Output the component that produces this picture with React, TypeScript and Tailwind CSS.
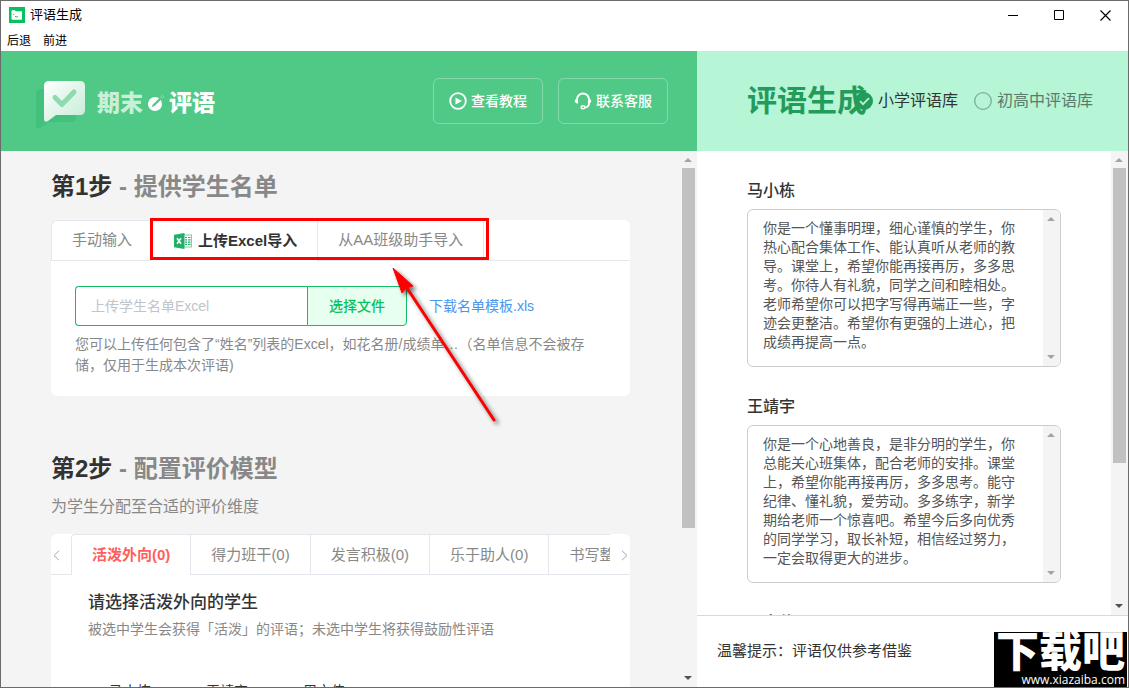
import React, { useState } from 'react';

interface Student {
  name: string;
  comment: string;
}

const STUDENTS: Student[] = [
  {
    name: '马小栋',
    comment:
      '你是一个懂事明理，细心谨慎的学生，你热心配合集体工作、能认真听从老师的教导。课堂上，希望你能再接再厉，多多思考。你待人有礼貌，同学之间和睦相处。老师希望你可以把字写得再端正一些，字迹会更整洁。希望你有更强的上进心，把成绩再提高一点。',
  },
  {
    name: '王靖宇',
    comment:
      '你是一个心地善良，是非分明的学生，你总能关心班集体，配合老师的安排。课堂上，希望你能再接再厉，多多思考。能守纪律、懂礼貌，爱劳动。多多练字，新学期给老师一个惊喜吧。希望今后多向优秀的同学学习，取长补短，相信经过努力，一定会取得更大的进步。',
  },
  { name: '周文伟', comment: '' },
];

const MODELS = ['活泼外向', '得力班干', '发言积极', '乐于助人', '书写整洁'];

const AppIcon = () => (
  <svg width="16" height="16" viewBox="0 0 16 16" aria-hidden="true">
    <rect width="16" height="16" fill="#07c160" />
    <path d="M2.500 4.200q0-.9.9-.9h2.400l1.100 1h5.200q.9 0 .9.9v6.600q0 .9-.9.9H3.400q-.9 0-.9-.9z" fill="#fff" />
    <path d="M4.200 7.300l1 .5M6 9.500q1.500 1 3 0" stroke="#07c160" fill="none" />
  </svg>
);

const BubbleLogo = () => (
  <svg width="52" height="50" viewBox="0 0 52 50" aria-hidden="true">
    <defs>
      <linearGradient id="bubble" x1="0" y1="0" x2="1" y2="1">
        <stop offset="0" stopColor="#fff" />
        <stop offset="1" stopColor="#c3ecd5" />
      </linearGradient>
    </defs>
    <path d="M6 9h30q5 0 5 5v23q0 5-5 5H14l-9 6q-4 2-4-2V14q0-5 5-5z" fill="#43c17c" />
    <path d="M14 1h31q5 0 5 5v24q0 5-5 5H21l-8 6q-4 2-4-2V6q0-5 5-5z" fill="url(#bubble)" />
    <path d="M20 17.500l7 7L39 12" fill="none" stroke="#8fdab1" strokeWidth="5" strokeLinecap="round" strokeLinejoin="round" />
  </svg>
);

const PenMark = () => (
  <svg width="18" height="18" viewBox="0 0 18 18" aria-hidden="true">
    <circle cx="8" cy="10" r="7" fill="#fff" />
    <path d="M6.500 11.500L15 3" stroke="#50c987" strokeWidth="2.400" />
    <path d="M4.800 13l.8-2.600 1.800 1.800z" fill="#50c987" />
    <path d="M13 3.500l2.500-2 1.200 1.200-2 2.300" stroke="#a5e3c1" fill="none" strokeWidth="0.700" />
  </svg>
);

const PlayIcon = () => (
  <svg width="18" height="18" viewBox="0 0 18 18" fill="none" aria-hidden="true">
    <circle cx="9" cy="9" r="7.800" stroke="#fff" strokeWidth="1.800" />
    <path d="M6.500 5.400v7.200L13 9z" fill="#fff" />
  </svg>
);

const HeadsetIcon = () => (
  <svg width="18" height="18" viewBox="0 0 18 18" fill="none" aria-hidden="true">
    <path d="M3 8.500V7.500a6 6 0 0 1 12 0v4q0 3.500-4.500 4.200" stroke="#fff" strokeWidth="1.800" />
    <path d="M3 6.800q-2.300.4-2.300 2.200T3 11.400h1V6.800zM15 6.800q2.300.4 2.300 2.200T15 11.400h-1V6.800z" fill="#fff" />
    <ellipse cx="9" cy="15.300" rx="1.900" ry="1.500" stroke="#fff" strokeWidth="1.400" />
  </svg>
);

const ExcelIcon = () => (
  <svg width="18" height="16" viewBox="0 0 18 16" aria-hidden="true">
    <rect x="9" y="2" width="8.500" height="12" fill="#fff" stroke="#7fcfa4" strokeWidth="1" />
    <path d="M11 4.500h2M14 4.500h2.500M11 6.800h2M14 6.800h2.500M11 9.100h2M14 9.100h2.500M11 11.400h2M14 11.400h2.500" stroke="#29b36b" strokeWidth="1.200" />
    <path d="M0 1.800L10.500 0v16L0 14.200z" fill="#21b067" />
    <path d="M3 5.200l4 5.600M7 5.200l-4 5.600" stroke="#fff" strokeWidth="1.500" />
  </svg>
);

const Chevron = ({ flip }: { flip?: boolean }) => (
  <svg width="7" height="11" viewBox="0 0 7 11" fill="none" stroke="#a4a7ad" aria-hidden="true">
    <path d={flip ? 'M1 .8l5 4.700-5 4.700' : 'M6 .8L1 5.500l5 4.700'} />
  </svg>
);

interface ScrollBarProps {
  trackClass: string;
  thumbClass?: string;
  upClass: string;
  downClass: string;
}

const ScrollBar = ({ trackClass, thumbClass, upClass, downClass }: ScrollBarProps) => (
  <div className={`flex w-[17px] shrink-0 flex-col items-center ${trackClass}`} aria-hidden="true">
    <svg width="17" height="17" viewBox="0 0 17 17" className={upClass}>
      <path d="M4 11h8L8 7z" fill="currentColor" />
    </svg>
    <div className="w-[13px] flex-1">{thumbClass && <div className={`bg-[#c1c1c1] ${thumbClass}`} />}</div>
    <svg width="17" height="17" viewBox="0 0 17 17" className={downClass}>
      <path d="M4 6h8L8 10z" fill="currentColor" />
    </svg>
  </div>
);

const TitleBar = () => (
  <div className="shrink-0 bg-white text-black">
    <div className="flex h-7 items-center pl-2">
      <AppIcon />
      <h1 className="ml-[5px] flex-1 text-[13px] leading-5">评语生成</h1>
      <button type="button" aria-label="最小化" className="flex h-full w-[46px] items-center justify-center">
        <svg width="11" height="11" viewBox="0 0 11 11" stroke="#000"><path d="M0 5.500h10" /></svg>
      </button>
      <button type="button" aria-label="最大化" className="flex h-full w-[46px] items-center justify-center">
        <svg width="11" height="11" viewBox="0 0 11 11" fill="none" stroke="#000"><path d="M.5.5h9v9h-9z" /></svg>
      </button>
      <button type="button" aria-label="关闭" className="flex h-full w-[46px] items-center justify-center">
        <svg width="11" height="11" viewBox="0 0 11 11" stroke="#000" strokeWidth="1.200"><path d="M.5.5l10 10M10.500.5l-10 10" /></svg>
      </button>
    </div>
    <nav className="flex h-[22px] items-center gap-3 pl-[6px] pt-[2px] text-xs">
      <button type="button">后退</button>
      <button type="button">前进</button>
    </nav>
  </div>
);

const BrandHeader = () => (
  <header className="flex h-[100px] shrink-0 items-center bg-[#50c987] pl-[34px] pr-[29px]">
    <div className="pt-2">
      <BubbleLogo />
    </div>
    <div className="ml-[10px] flex flex-1 items-center pt-1 text-[23px] font-black leading-8 text-white">
      <span className="text-[#c9efd9]">期末</span>
      <span className="mx-1"><PenMark /></span>
      <span>评语</span>
    </div>
    <div className="flex gap-[15px] text-sm font-medium text-white">
      <button type="button" className="flex h-[46px] items-center gap-1 rounded-md border border-white/30 px-[15px]">
        <PlayIcon />
        查看教程
      </button>
      <button type="button" className="flex h-[46px] items-center gap-1 rounded-md border border-white/30 px-[15px]">
        <HeadsetIcon />
        联系客服
      </button>
    </div>
  </header>
);

const StepTitle = ({ step, title }: { step: string; title: string }) => (
  <h2 className="text-2xl font-bold leading-[34px] text-[#333]">
    {step} <span className="text-[#888]">- {title}</span>
  </h2>
);

// 红框和箭头标注
const Callout = () => (
  <>
    <div className="pointer-events-none absolute left-[99px] -top-[2px] h-[42px] w-[339px] border-[3px] border-[#f00]" />
    <svg className="pointer-events-none absolute left-[334px] top-10 drop-shadow-[3px_3px_2px_rgba(0,0,0,0.55)]" width="120" height="170" viewBox="0 0 120 170" aria-hidden="true">
      <path d="M22 28L109 160" stroke="#f00" strokeWidth="3" strokeLinecap="round" />
      <path d="M8 8L28 26 21 28 17 33z" fill="#f00" stroke="#f00" />
    </svg>
  </>
);

const ImportStep = () => (
  <section>
    <StepTitle step="第1步" title="提供学生名单" />
    <div className="relative mt-4 rounded-md bg-white">
      <div className="flex h-[41px] text-[15px] text-[#888]" role="tablist">
        <button type="button" role="tab" className="rounded-tl-md border-b border-l border-t border-[#e4e7ed] px-5">
          手动输入
        </button>
        <button type="button" role="tab" aria-selected="true" className="flex items-center gap-[6px] border-r border-t border-[#e4e7ed] pl-[22px] pr-5 font-bold text-[#333]">
          <ExcelIcon />
          上传Excel导入
        </button>
        <button type="button" role="tab" className="border-b border-r border-t border-[#e4e7ed] px-5">
          从AA班级助手导入
        </button>
        <div className="flex-1 border-b border-[#e4e7ed]" />
      </div>
      <div className="px-6 pb-5 pt-[25px] text-sm">
        <div className="flex items-center">
          <input
            type="text"
            readOnly
            aria-label="学生名单文件"
            placeholder="上传学生名单Excel"
            className="h-10 w-[232px] rounded-l border border-r-0 border-[#12bd66] px-[15px] placeholder:text-[#c0c4cc]"
          />
          <button type="button" className="h-10 w-[100px] rounded-r border border-[#12bd66] bg-[#e6ffef] font-medium text-[#07c160]">
            选择文件
          </button>
          <a href="#template" className="ml-[22px] text-[#4896f0]">下载名单模板.xls</a>
        </div>
        <p className="mt-2 pr-5 leading-[21px] text-[#888]">
          您可以上传任何包含了“姓名”列表的Excel，如花名册/成绩单…（名单信息不会被存储，仅用于生成本次评语)
        </p>
      </div>
      <Callout />
    </div>
  </section>
);

const ModelStep = () => {
  const [active, setActive] = useState(0);

  return (
    <section className="mt-14">
      <StepTitle step="第2步" title="配置评价模型" />
      <p className="pt-[9px] text-base text-[#888]">为学生分配至合适的评价维度</p>
      <div className="mt-[15px] rounded-md bg-white">
        <div className="flex h-[41px]">
          <button type="button" aria-label="上一页" className="flex w-5 shrink-0 items-center border-b border-[#e4e7ed] pl-[2px] pt-[2px]">
            <Chevron />
          </button>
          <div className="flex min-w-0 flex-1 overflow-hidden rounded-tl border-l border-t border-[#e4e7ed]" role="tablist">
            {MODELS.map((model, i) => (
              <button
                key={model}
                type="button"
                role="tab"
                aria-selected={i === active}
                onClick={() => setActive(i)}
                className={`shrink-0 border-r border-[#e4e7ed] px-5 pt-px text-[15px] ${
                  i === active ? 'font-bold text-[#ff5f5c]' : 'border-b text-[#888]'
                }`}
              >
                {model}(0)
              </button>
            ))}
          </div>
          <button type="button" aria-label="下一页" className="flex w-5 shrink-0 items-center justify-end border-b border-[#e4e7ed] pr-[2px] pt-[2px]">
            <Chevron flip />
          </button>
        </div>
        <div className="pb-10 pl-[37px] pt-[15px]">
          <h3 className="text-[17px] font-medium leading-[26px] text-[#333]">请选择{MODELS[active]}的学生</h3>
          <p className="mt-[3px] text-sm text-[#888]">被选中学生会获得「活泼」的评语；未选中学生将获得鼓励性评语</p>
          <div className="mt-[42px] flex pl-[21px] text-sm text-[#333]">
            {STUDENTS.map((s) => (
              <button key={s.name} type="button" className="w-[97px] text-left">{s.name}</button>
            ))}
          </div>
        </div>
      </div>
    </section>
  );
};

const LibraryPicker = () => (
  <header className="flex h-[100px] shrink-0 items-center bg-[#b6f5d5] pl-[50px]">
    <h2 className="w-[108px] shrink-0 whitespace-nowrap text-[30px] font-bold leading-10 text-[#239c5b]">评语生成</h2>
    <div className="flex gap-4 whitespace-nowrap text-base">
      <label className="relative flex items-center gap-[5px] text-[#333]">
        <input type="radio" name="library" defaultChecked className="sr-only" />
        <svg width="18" height="18" viewBox="0 0 18 18" fill="none" aria-hidden="true">
          <circle cx="9" cy="9" r="9" fill="#239c5b" />
          <path d="M5 9.200l3 3 6-6" stroke="#b6f5d5" strokeWidth="1.800" />
        </svg>
        小学评语库
      </label>
      <label className="relative flex items-center gap-[5px] text-[#5b7b6b]">
        <input type="radio" name="library" className="sr-only" />
        <svg width="18" height="18" viewBox="0 0 18 18" fill="none" aria-hidden="true">
          <circle cx="9" cy="9" r="8.300" stroke="#7fac95" strokeWidth="1.300" />
        </svg>
        初高中评语库
      </label>
    </div>
  </header>
);

const CommentCard = ({ student }: { student: Student }) => (
  <div className="pt-7">
    <label htmlFor={student.name} className="block text-base font-medium text-[#333]">{student.name}</label>
    <div className="mt-[6px] flex h-[158px] overflow-hidden rounded-md border border-[#ccc]">
      <textarea
        id={student.name}
        defaultValue={student.comment}
        className="min-w-0 flex-1 resize-none overflow-hidden px-[15px] py-[9px] text-sm leading-[19px] text-[#555] outline-none"
      />
      <ScrollBar trackClass="bg-[#f4f4f4]" upClass="text-[#a3a3a3]" downClass="text-[#a3a3a3]" />
    </div>
  </div>
);

const Watermark = () => (
  <div className="absolute bottom-0 right-[1px] flex h-[55px] w-[133px] flex-col items-end overflow-hidden bg-black pr-[2px] text-white">
    <div className="whitespace-nowrap text-[43px] font-black leading-[41px]">下载吧</div>
    <div className="font-['Open_Sans',sans-serif] text-xs leading-[14px]">www.xiazaiba.com</div>
  </div>
);

const App: React.FC = () => {
  return (
    <div className="relative flex h-screen flex-col overflow-hidden border border-[#6b6b6b] bg-white font-['Liberation_Sans','Noto_Sans_CJK_SC',sans-serif]">
      <TitleBar />
      <div className="flex min-h-0 flex-1">
        <main className="flex min-w-0 flex-1 flex-col">
          <BrandHeader />
          <div className="flex min-h-0 flex-1 bg-[#f4f4f4]">
            <div className="min-w-0 flex-1 overflow-hidden px-[50px] pt-[19px]">
              <ImportStep />
              <ModelStep />
            </div>
            <ScrollBar trackClass="bg-[#f4f4f4]" thumbClass="h-[360px]" upClass="text-[#a3a3a3]" downClass="text-[#505050]" />
          </div>
        </main>
        <aside className="flex w-[431px] shrink-0 flex-col">
          <LibraryPicker />
          <div className="flex min-h-0 flex-1 border-b border-[#d9d9d9]">
            <div className="min-w-0 flex-1 overflow-hidden px-[50px]">
              {STUDENTS.map((s) => (
                <CommentCard key={s.name} student={s} />
              ))}
            </div>
            <ScrollBar trackClass="bg-[#f4f4f4]" thumbClass="h-[295px]" upClass="text-[#a3a3a3]" downClass="text-[#505050]" />
          </div>
          <footer className="h-[71px] shrink-0 px-5 pt-[23px] text-[15px] leading-6 text-[#333]">
            温馨提示：评语仅供参考借鉴
          </footer>
        </aside>
      </div>
      <Watermark />
    </div>
  );
};

export default App;
